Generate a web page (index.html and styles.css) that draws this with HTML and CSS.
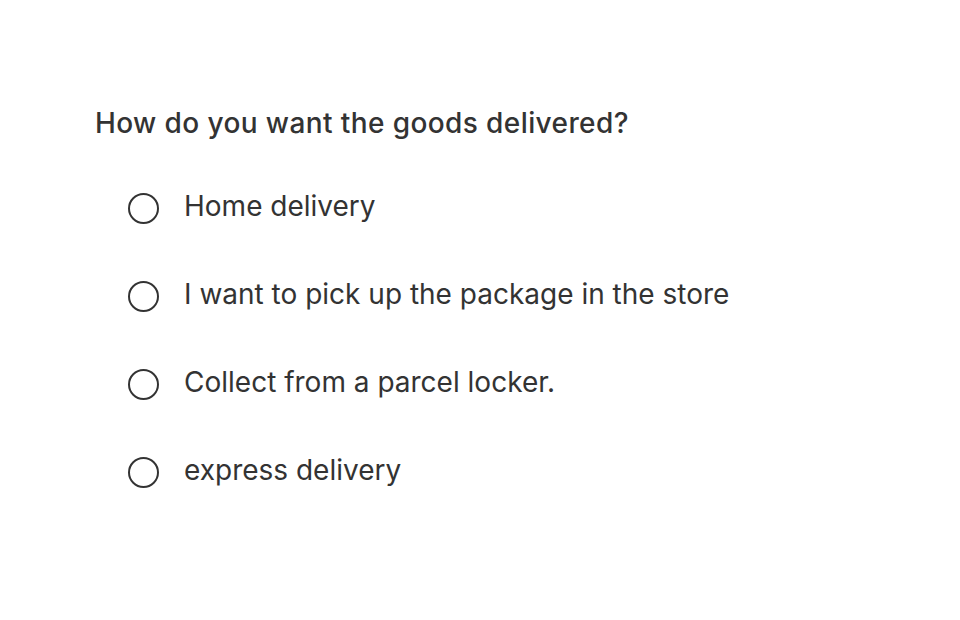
FILE: index.html
```html
<!DOCTYPE html>
<html lang="en">
<head>
<meta charset="utf-8">
<title>Delivery</title>
<link rel="stylesheet" href="styles.css">
</head>
<body>
<form class="form">
  <fieldset class="group">
    <legend class="question">How do you want the goods delivered?</legend>
    <div class="options">
      <label class="option"><input type="radio" name="delivery" class="radio"><span class="label">Home delivery</span></label>
      <label class="option"><input type="radio" name="delivery" class="radio"><span class="label">I want to pick up the package in the store</span></label>
      <label class="option"><input type="radio" name="delivery" class="radio"><span class="label">Collect from a parcel locker.</span></label>
      <label class="option"><input type="radio" name="delivery" class="radio"><span class="label">express delivery</span></label>
    </div>
  </fieldset>
</form>
</body>
</html>
```
FILE: styles.css
```css
html, body {
  margin: 0;
  padding: 0;
  background: #ffffff;
}
body {
  font-family: "Inter", "Roboto", sans-serif;
  color: #333333;
  font-size: 28px;
  line-height: 34px;
}
.form {
  padding: 106px 0 0 95px;
}
.group {
  border: 0;
  margin: 0;
  padding: 0;
  min-width: 0;
}
.question {
  padding: 0;
  margin: 0 0 49px 0;
  font-weight: 500;
  font-size: 28px;
  line-height: 34px;
  letter-spacing: 0.4px;
  float: left;
  width: 100%;
}
.options {
  clear: both;
  display: flex;
  flex-direction: column;
  gap: 53px;
  padding-left: 33px;
}
.option {
  display: flex;
  align-items: flex-start;
  gap: 25px;
  cursor: pointer;
}
.radio {
  appearance: none;
  -webkit-appearance: none;
  margin: 4px 0 0 0;
  width: 31px;
  height: 31px;
  border: 2px solid #333333;
  border-radius: 50%;
  box-sizing: border-box;
  flex: none;
  background: #fff;
}
.label {
  font-weight: 400;
}
```
